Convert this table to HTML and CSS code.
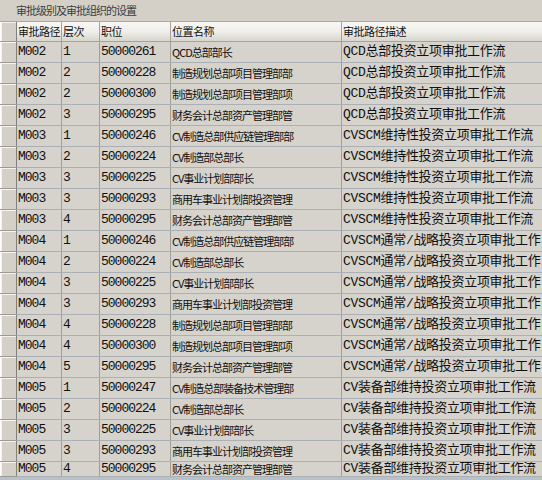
FILE: index.html
```html
<!DOCTYPE html>
<html lang="zh">
<head>
<meta charset="utf-8">
<link rel="stylesheet" href="styles.css">
</head>
<body>
<div class="window">
  <div class="title">审批级别及审批组织的设置</div>
  <div class="grid-wrap">
    <table class="grid">
      <colgroup>
        <col class="c0"><col class="c1"><col class="c2"><col class="c3"><col class="c4"><col class="c5">
      </colgroup>
      <thead>
        <tr>
          <th class="rh"></th>
          <th>审批路径</th>
          <th>层次</th>
          <th>职位</th>
          <th>位置名称</th>
          <th>审批路径描述</th>
        </tr>
      </thead>
      <tbody>
        <tr><td class="rh"></td><td class="mono">M002</td><td class="mono">1</td><td class="mono">50000261</td><td class="name">QCD总部部长</td><td class="desc">QCD总部投资立项审批工作流</td></tr>
        <tr><td class="rh"></td><td class="mono">M002</td><td class="mono">2</td><td class="mono">50000228</td><td class="name">制造规划总部项目管理部部</td><td class="desc">QCD总部投资立项审批工作流</td></tr>
        <tr><td class="rh"></td><td class="mono">M002</td><td class="mono">2</td><td class="mono">50000300</td><td class="name">制造规划总部项目管理部项</td><td class="desc">QCD总部投资立项审批工作流</td></tr>
        <tr><td class="rh"></td><td class="mono">M002</td><td class="mono">3</td><td class="mono">50000295</td><td class="name">财务会计总部资产管理部管</td><td class="desc">QCD总部投资立项审批工作流</td></tr>
        <tr><td class="rh"></td><td class="mono">M003</td><td class="mono">1</td><td class="mono">50000246</td><td class="name">CV制造总部供应链管理部部</td><td class="desc">CVSCM维持性投资立项审批工作流</td></tr>
        <tr><td class="rh"></td><td class="mono">M003</td><td class="mono">2</td><td class="mono">50000224</td><td class="name">CV制造部总部长</td><td class="desc">CVSCM维持性投资立项审批工作流</td></tr>
        <tr><td class="rh"></td><td class="mono">M003</td><td class="mono">3</td><td class="mono">50000225</td><td class="name">CV事业计划部部长</td><td class="desc">CVSCM维持性投资立项审批工作流</td></tr>
        <tr><td class="rh"></td><td class="mono">M003</td><td class="mono">3</td><td class="mono">50000293</td><td class="name">商用车事业计划部投资管理</td><td class="desc">CVSCM维持性投资立项审批工作流</td></tr>
        <tr><td class="rh"></td><td class="mono">M003</td><td class="mono">4</td><td class="mono">50000295</td><td class="name">财务会计总部资产管理部管</td><td class="desc">CVSCM维持性投资立项审批工作流</td></tr>
        <tr><td class="rh"></td><td class="mono">M004</td><td class="mono">1</td><td class="mono">50000246</td><td class="name">CV制造总部供应链管理部部</td><td class="desc">CVSCM通常/战略投资立项审批工作</td></tr>
        <tr><td class="rh"></td><td class="mono">M004</td><td class="mono">2</td><td class="mono">50000224</td><td class="name">CV制造部总部长</td><td class="desc">CVSCM通常/战略投资立项审批工作</td></tr>
        <tr><td class="rh"></td><td class="mono">M004</td><td class="mono">3</td><td class="mono">50000225</td><td class="name">CV事业计划部部长</td><td class="desc">CVSCM通常/战略投资立项审批工作</td></tr>
        <tr><td class="rh"></td><td class="mono">M004</td><td class="mono">3</td><td class="mono">50000293</td><td class="name">商用车事业计划部投资管理</td><td class="desc">CVSCM通常/战略投资立项审批工作</td></tr>
        <tr><td class="rh"></td><td class="mono">M004</td><td class="mono">4</td><td class="mono">50000228</td><td class="name">制造规划总部项目管理部部</td><td class="desc">CVSCM通常/战略投资立项审批工作</td></tr>
        <tr><td class="rh"></td><td class="mono">M004</td><td class="mono">4</td><td class="mono">50000300</td><td class="name">制造规划总部项目管理部项</td><td class="desc">CVSCM通常/战略投资立项审批工作</td></tr>
        <tr><td class="rh"></td><td class="mono">M004</td><td class="mono">5</td><td class="mono">50000295</td><td class="name">财务会计总部资产管理部管</td><td class="desc">CVSCM通常/战略投资立项审批工作</td></tr>
        <tr><td class="rh"></td><td class="mono">M005</td><td class="mono">1</td><td class="mono">50000247</td><td class="name">CV制造总部装备技术管理部</td><td class="desc">CV装备部维持投资立项审批工作流</td></tr>
        <tr><td class="rh"></td><td class="mono">M005</td><td class="mono">2</td><td class="mono">50000224</td><td class="name">CV制造部总部长</td><td class="desc">CV装备部维持投资立项审批工作流</td></tr>
        <tr><td class="rh"></td><td class="mono">M005</td><td class="mono">3</td><td class="mono">50000225</td><td class="name">CV事业计划部部长</td><td class="desc">CV装备部维持投资立项审批工作流</td></tr>
        <tr><td class="rh"></td><td class="mono">M005</td><td class="mono">3</td><td class="mono">50000293</td><td class="name">商用车事业计划部投资管理</td><td class="desc">CV装备部维持投资立项审批工作流</td></tr>
        <tr class="last"><td class="rh"></td><td class="mono">M005</td><td class="mono">4</td><td class="mono">50000295</td><td class="name">财务会计总部资产管理部管</td><td class="desc">CV装备部维持投资立项审批工作流</td></tr>
      </tbody>
    </table>
  </div>
</div>
</body>
</html>
```
FILE: styles.css
```css
html, body {
  margin: 0;
  padding: 0;
  background: #d4d0c8;
  overflow: hidden;
}
.window {
  width: 542px;
  height: 480px;
  overflow: hidden;
  background: #b8c0c8;
  display: flex;
  flex-direction: column;
}
.title {
  height: 22px;
  flex: none;
  box-sizing: border-box;
  padding-left: 16px;
  line-height: 21px;
  font-family: "Noto Sans CJK SC", sans-serif;
  font-size: 11px;
  letter-spacing: -1px;
  color: #3c3c3c;
  background: #d4d0c8;
  border-bottom: 1px solid #a8a8a8;
}
.grid-wrap {
  height: 455px;
  flex: none;
  overflow: hidden;
  background: #d4d0c8;
}
.grid {
  border-collapse: collapse;
  table-layout: fixed;
  width: 620px;
}
.c0 { width: 16px; }
.c1 { width: 45px; }
.c2 { width: 38px; }
.c3 { width: 71px; }
.c4 { width: 171px; }
.c5 { width: 279px; }
.grid th, .grid td {
  padding: 0 0 0 1px;
  white-space: nowrap;
  overflow: hidden;
  text-align: left;
  vertical-align: middle;
  color: #101010;
}
.grid th {
  height: 19px;
  font-family: "Noto Sans CJK SC", sans-serif;
  font-size: 11px;
  font-weight: normal;
  letter-spacing: -0.5px;
  background: linear-gradient(#f8f7f4 0%, #efeee9 50%, #d8d5cd 100%);
  border-left: 1px solid #a6a39b;
  border-bottom: 1px solid #a6a39b;
  line-height: 19px;
}
.grid td {
  height: 20px;
  line-height: 20px;
  border-left: 1px solid #a09e98;
  border-bottom: 1px solid #aab0b6;
  background: #d6d3cc;
}
.grid tr.last td {
  height: 14px;
  line-height: 14px;
}
.grid .rh {
  padding: 0;
  background: #d4d0c8;
  border-left: 1px solid #ffffff;
  border-right: 1px solid #808080;
  border-bottom: 1px solid #9c9a94;
  box-shadow: inset 1px 1px 0 #f4f3ef;
}
.mono {
  font-family: "Liberation Mono", monospace;
  font-size: 13px;
  letter-spacing: -1px;
}
.name {
  font-family: "Noto Sans CJK SC", sans-serif;
  font-size: 11px;
  letter-spacing: -1px;
}
.desc {
  font-family: "Liberation Mono", "Noto Sans CJK SC", monospace;
  font-size: 13px;
  letter-spacing: -0.3px;
}
```
